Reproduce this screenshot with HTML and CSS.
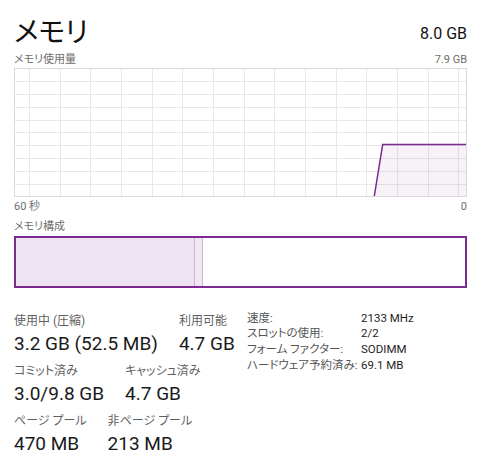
FILE: index.html
```html
<!DOCTYPE html>
<html lang="ja">
<head>
<meta charset="utf-8">
<link rel="stylesheet" href="styles.css">
</head>
<body>
<div class="panel">
  <div class="head">
    <h1 class="title">メモリ</h1>
    <span class="total">8.0 GB</span>
  </div>
  <div class="cap cap-usage"><span>メモリ使用量</span><span>7.9 GB</span></div>
  <div class="chart">
    <svg class="chart-svg" width="451" height="127" viewBox="0 0 451 127">
      <path class="grid" d="M14.5 0V127M45.5 0V127M75.5 0V127M106.5 0V127M137.5 0V127M167.5 0V127M198.5 0V127M229.5 0V127M259.5 0V127M290.5 0V127M321.5 0V127M351.5 0V127M382.5 0V127M413.5 0V127M443.5 0V127M0 12.5H451M0 25.5H451M0 38.5H451M0 51.5H451M0 63.5H451M0 76.5H451M0 89.5H451M0 102.5H451M0 115.5H451"/>
      <polygon class="area" points="359.3,127 367.7,75.5 451,75.5 451,127"/>
      <polyline class="line" points="359.3,127 367.7,75.5 451,75.5"/>
    </svg>
  </div>
  <div class="cap cap-time"><span>60 秒</span><span>0</span></div>
  <div class="cap cap-comp"><span>メモリ構成</span></div>
  <div class="bar">
    <div class="seg seg-inuse" style="width:178px"></div>
    <div class="seg seg-mod" style="width:7px"></div>
    <div class="seg seg-free"></div>
  </div>
  <div class="stats">
    <div class="left">
      <div class="row">
        <div class="stat"><div class="lbl">使用中 (圧縮)</div><div class="val">3.2 GB (52.5 MB)</div></div>
        <div class="stat"><div class="lbl">利用可能</div><div class="val">4.7 GB</div></div>
      </div>
      <div class="row">
        <div class="stat"><div class="lbl">コミット済み</div><div class="val">3.0/9.8 GB</div></div>
        <div class="stat"><div class="lbl">キャッシュ済み</div><div class="val">4.7 GB</div></div>
      </div>
      <div class="row">
        <div class="stat"><div class="lbl">ページ プール</div><div class="val">470 MB</div></div>
        <div class="stat"><div class="lbl">非ページ プール</div><div class="val">213 MB</div></div>
      </div>
    </div>
    <dl class="props">
      <dt>速度:</dt><dd>2133 MHz</dd>
      <dt>スロットの使用:</dt><dd>2/2</dd>
      <dt>フォーム ファクター:</dt><dd>SODIMM</dd>
      <dt>ハードウェア予約済み:</dt><dd>69.1 MB</dd>
    </dl>
  </div>
</div>
</body>
</html>
```

FILE: styles.css
```css
html, body {
  margin: 0;
  padding: 0;
  background: #ffffff;
}

body {
  font-family: Roboto, "Noto Sans CJK JP", sans-serif;
  color: #1a1a1a;
  font-feature-settings: "palt";
}

.panel {
  width: 453px;
  padding: 14px 22px 0 14px;
}

.head {
  display: flex;
  justify-content: space-between;
  align-items: flex-end;
  height: 32px;
}

.title {
  margin: 0;
  font-family: "Noto Sans CJK JP", sans-serif;
  font-weight: normal;
  font-size: 28px;
  line-height: 32px;
  color: #111;
}

.total {
  font-size: 16px;
  line-height: 20px;
  margin-bottom: 2px;
  color: #111;
}

.cap {
  display: flex;
  justify-content: space-between;
  font-size: 11px;
  line-height: 14px;
  color: #6e6e6e;
}

.cap-usage { margin-top: 7px; }
.cap-time { margin-top: 3px; }
.cap-comp { margin-top: 6px; }

.chart {
  margin-top: 1px;
  width: 451px;
  height: 127px;
  border: 1px solid #d9d9d9;
}

.chart-svg {
  display: block;
}

.grid {
  stroke: #e8e8e8;
  stroke-width: 1;
  fill: none;
  shape-rendering: crispEdges;
}

.area {
  fill: #8b3aa0;
  fill-opacity: 0.07;
}

.line {
  fill: none;
  stroke: #7b2a8f;
  stroke-width: 1.5;
}

.bar {
  margin-top: 2px;
  height: 48px;
  border: 2px solid #7b2a8f;
  display: flex;
}

.seg { height: 100%; }

.seg-inuse {
  background: #ede3f1;
  border-right: 1px solid #cdb3d6;
}

.seg-mod {
  background: #efe7f3;
  border-right: 1px solid #cdb3d6;
}

.seg-free {
  flex: 1;
  background: #ffffff;
}

.stats {
  display: flex;
  align-items: flex-start;
  margin-top: 21px;
}

.left {
  width: 233px;
  padding-top: 4px;
  display: flex;
  flex-direction: column;
  gap: 7px;
}

.row {
  display: flex;
  gap: 21px;
}

.lbl {
  font-size: 12px;
  line-height: 16px;
  color: #5f5f5f;
  white-space: nowrap;
}

.val {
  margin-top: 3px;
  font-size: 19px;
  line-height: 24px;
  color: #1a1a1a;
  white-space: nowrap;
}

.props {
  margin: 0;
  padding-top: 1.5px;
  display: grid;
  grid-template-columns: 114px auto;
  align-content: start;
  font-size: 11.5px;
  line-height: 15.7px;
}

.props dt {
  color: #555;
  white-space: nowrap;
}

.props dd {
  margin: 0;
  color: #1e1e1e;
  white-space: nowrap;
}
```
